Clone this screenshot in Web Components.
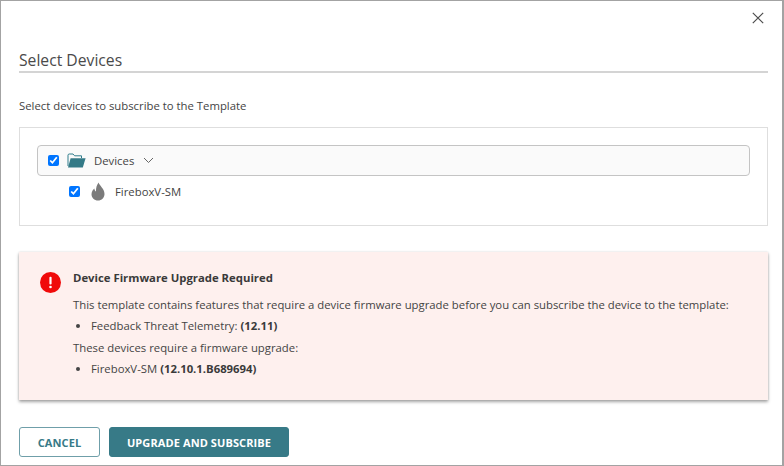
<!DOCTYPE html>
<html>
<head>
<meta charset="utf-8">
<style>
  html, body { margin: 0; padding: 0; background: #fff; }
  body { font-family: "Open Sans", sans-serif; color: #444; overflow: hidden; }
</style>
</head>
<body>
<subscribe-dialog>
  <span slot="title">Select Devices</span>
  <span slot="intro">Select devices to subscribe to the Template</span>
  <device-tree slot="tree"></device-tree>
  <firmware-alert slot="alert"></firmware-alert>
  <dialog-button slot="actions" kind="outline">CANCEL</dialog-button>
  <dialog-button slot="actions" kind="solid">UPGRADE AND SUBSCRIBE</dialog-button>
</subscribe-dialog>

<script>
(function () {
  class SubscribeDialog extends HTMLElement {
    constructor() {
      super();
      this.attachShadow({ mode: 'open' });
    }
    connectedCallback() {
      this.shadowRoot.innerHTML = `
        <style>
          :host { display: block; box-sizing: border-box; width: 784px; height: 466px; border: 1px solid #a3a3a3; border-right-width: 2px; padding: 0 14px 0 18px; background: #fff; position: relative; }
          .close { position: absolute; top: 11px; right: 18px; width: 12px; height: 12px; }
          h2 { margin: 0; padding: 47px 0 0; height: 23px; font-size: 15.7px; line-height: 24px; font-weight: 400; color: #4a4a4a; box-sizing: content-box; }
          .rule { height: 2px; background: #d4d4d4; margin-top: 0; }
          .intro { font-size: 11.33px; line-height: 16px; color: #444; margin-top: 25px; }
          .tree { margin-top: 13px; }
          .alert { margin-top: 26px; }
          .actions { display: flex; gap: 9px; margin-top: 27px; }
        </style>
        <svg class="close" viewBox="0 0 12 12"><path d="M.8 .8 11.2 11.2M11.2 .8 .8 11.2" stroke="#4d4d4d" stroke-width="1.2" fill="none"/></svg>
        <h2><slot name="title"></slot></h2>
        <div class="rule"></div>
        <div class="intro"><slot name="intro"></slot></div>
        <div class="tree"><slot name="tree"></slot></div>
        <div class="alert"><slot name="alert"></slot></div>
        <div class="actions"><slot name="actions"></slot></div>
      `;
    }
  }

  class DeviceTree extends HTMLElement {
    constructor() {
      super();
      this.attachShadow({ mode: 'open' });
    }
    connectedCallback() {
      this.shadowRoot.innerHTML = `
        <style>
          :host { display: block; box-sizing: border-box; height: 99px; border: 1px solid #dedede; padding: 17px 17px 0 17px; font-size: 11.33px; color: #444; }
          .group { display: flex; align-items: center; box-sizing: border-box; height: 31px; border: 1px solid #c4c4c4; border-radius: 4px; padding-left: 10px; background: #fafafa; }
          .leaf { display: flex; align-items: center; height: 31px; padding-left: 32px; }
          input { appearance: auto; width: 11px; height: 11px; margin: 0; accent-color: #0075ff; flex: none; }
          .folder { margin-left: 8px; width: 19px; height: 15px; }
          .flame { margin-left: 11px; width: 14px; height: 19px; }
          .name { margin-left: 8px; }
          .leaf .name { margin-left: 10px; }
          .chev { margin-left: 9px; width: 11px; height: 7px; }
        </style>
        <div class="group">
          <input type="checkbox" checked>
          <svg class="folder" viewBox="0 0 19 15">
            <path d="M1 13V2.2C1 1.5 1.5 1 2.2 1H6l1.6 1.8H14.5V5" fill="none" stroke="#2f7d8c" stroke-width="1"/>
            <path d="M1 14.5 3.6 5.2H18.6L15.8 14.5Z" fill="#347a87"/>
          </svg>
          <span class="name">Devices</span>
          <svg class="chev" viewBox="0 0 11 7"><path d="M1 1 5.5 5.5 10 1" fill="none" stroke="#666" stroke-width="1"/></svg>
        </div>
        <div class="leaf">
          <input type="checkbox" checked>
          <svg class="flame" viewBox="0 0 14 19">
            <path d="M7.6 .5C8.3 3.6 13.5 6.6 13.5 12 13.5 15.8 10.6 18.5 7 18.5 3.4 18.5.5 15.8.5 12.2.5 9.6 2 7.6 3.4 6.4 3.5 7.8 4 8.8 5 9.4 4.8 6 5.8 2.8 7.6.5Z" fill="#7b7b7b"/>
          </svg>
          <span class="name">FireboxV-SM</span>
        </div>
      `;
    }
  }

  class FirmwareAlert extends HTMLElement {
    constructor() {
      super();
      this.attachShadow({ mode: 'open' });
    }
    connectedCallback() {
      this.shadowRoot.innerHTML = `
        <style>
          :host { display: grid; grid-template-columns: 21px 1fr; column-gap: 12px; box-sizing: border-box; height: 148px; background: #fef0ee; padding: 18px 10px 0 21px; box-shadow: 0 2px 3px rgba(0,0,0,.35), 0 0 2px rgba(0,0,0,.12); font-size: 11.33px; color: #444; }
          .icon { width: 21px; height: 21px; margin-top: 2px; }
          h3 { margin: 0 0 11px; font-size: 11.33px; line-height: 16px; font-weight: 700; color: #3a3a3a; }
          p { margin: 0; line-height: 16px; }
          ul { margin: 5px 0 6px; padding: 0 0 0 18px; line-height: 16px; }
          b { font-weight: 700; color: #3a3a3a; }
        </style>
        <svg class="icon" viewBox="0 0 21 21">
          <circle cx="10.5" cy="10.5" r="10.5" fill="#f00a0a"/>
          <rect x="9.4" y="4.8" width="2.2" height="7.6" rx="1" fill="#fff"/>
          <circle cx="10.5" cy="15" r="1.3" fill="#fff"/>
        </svg>
        <div>
          <h3>Device Firmware Upgrade Required</h3>
          <p>This template contains features that require a device firmware upgrade before you can subscribe the device to the template:</p>
          <ul><li>Feedback Threat Telemetry: <b>(12.11)</b></li></ul>
          <p>These devices require a firmware upgrade:</p>
          <ul><li>FireboxV-SM <b>(12.10.1.B689694)</b></li></ul>
        </div>
      `;
    }
  }

  class DialogButton extends HTMLElement {
    constructor() {
      super();
      this.attachShadow({ mode: 'open' });
    }
    connectedCallback() {
      this.shadowRoot.innerHTML = `
        <style>
          :host { display: flex; align-items: center; justify-content: center; box-sizing: border-box; height: 30px; border-radius: 3px; font-size: 11px; font-weight: 700; letter-spacing: .1px; border: 1px solid #377a87; }
          :host([kind="outline"]) { width: 81px; background: #fff; color: #377a87; border-color: #6f9fa9; }
          :host([kind="solid"]) { width: 180px; background: #377a87; color: #fff; }
        </style>
        <slot></slot>
      `;
    }
  }

  customElements.define('subscribe-dialog', SubscribeDialog);
  customElements.define('device-tree', DeviceTree);
  customElements.define('firmware-alert', FirmwareAlert);
  customElements.define('dialog-button', DialogButton);
})();
</script>
</body>
</html>
